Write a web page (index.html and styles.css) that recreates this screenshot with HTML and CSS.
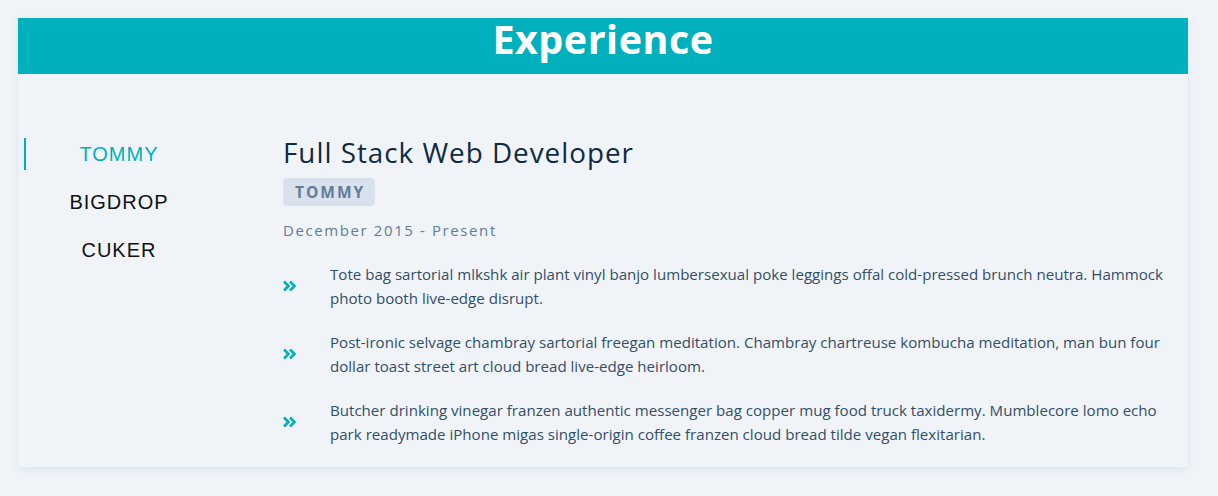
FILE: index.html
```html
<!DOCTYPE html>
<html lang="en">
<head>
<meta charset="utf-8">
<title>Experience</title>
<link rel="stylesheet" href="styles.css">
</head>
<body>
<section class="card">
  <header class="card-head"><h1>Experience</h1></header>
  <div class="card-body">
    <nav class="tabs">
      <div class="tab active">TOMMY</div>
      <div class="tab">BIGDROP</div>
      <div class="tab">CUKER</div>
    </nav>
    <div class="job">
      <h2 class="job-title">Full Stack Web Developer</h2>
      <span class="badge">TOMMY</span>
      <p class="dates">December 2015 - Present</p>
      <ul class="duties">
        <li>
          <svg class="chev" viewBox="0 0 14 12" aria-hidden="true"><path d="M1 1.5 L5.5 6 L1 10.5 M7 1.5 L11.5 6 L7 10.5" fill="none" stroke="currentColor" stroke-width="2.6" stroke-linejoin="miter"/></svg>
          <p>Tote bag sartorial mlkshk air plant vinyl banjo lumbersexual poke leggings offal cold-pressed brunch neutra. Hammock photo booth live-edge disrupt.</p>
        </li>
        <li>
          <svg class="chev" viewBox="0 0 14 12" aria-hidden="true"><path d="M1 1.5 L5.5 6 L1 10.5 M7 1.5 L11.5 6 L7 10.5" fill="none" stroke="currentColor" stroke-width="2.6" stroke-linejoin="miter"/></svg>
          <p>Post-ironic selvage chambray sartorial freegan meditation. Chambray chartreuse kombucha meditation, man bun four dollar toast street art cloud bread live-edge heirloom.</p>
        </li>
        <li>
          <svg class="chev" viewBox="0 0 14 12" aria-hidden="true"><path d="M1 1.5 L5.5 6 L1 10.5 M7 1.5 L11.5 6 L7 10.5" fill="none" stroke="currentColor" stroke-width="2.6" stroke-linejoin="miter"/></svg>
          <p>Butcher drinking vinegar franzen authentic messenger bag copper mug food truck taxidermy. Mumblecore lomo echo park readymade iPhone migas single-origin coffee franzen cloud bread tilde vegan flexitarian.</p>
        </li>
      </ul>
    </div>
  </div>
</section>
</body>
</html>
```
FILE: styles.css
```css
* { box-sizing: border-box; }
html, body { margin: 0; padding: 0; }
body {
  background: #f0f4f8;
  font-family: "Open Sans", "Noto Sans", sans-serif;
  color: #334e68;
  padding: 18px 30px 30px 18px;
}
.card {
  width: 1170px;
  background: #f0f4f8;
  box-shadow: 0 2px 8px rgba(0, 150, 180, 0.12);
}
.card-head {
  background: #00b0bc;
  height: 56px;
  text-align: center;
}
.card-head h1 {
  margin: 0;
  color: #fff;
  font-size: 39.5px;
  line-height: 42px;
  font-weight: 700;
  letter-spacing: 0.5px;
}
.card-body {
  display: flex;
  padding: 64px 18px 21px 6px;
}
.tabs {
  width: 188px;
  flex: none;
  display: flex;
  flex-direction: column;
  gap: 16px;
}
.tab {
  font-family: "Liberation Sans", Arial, sans-serif;
  font-size: 20px;
  letter-spacing: 1px;
  color: #111;
  text-align: center;
  line-height: 32px;
  border-left: 2px solid transparent;
}
.tab.active {
  color: #00b0bc;
  border-left-color: #00b0bc;
}
.job {
  flex: 1;
  margin-left: 71px;
}
.job-title {
  margin: -2px 0 0;
  font-size: 27.8px;
  font-weight: 400;
  letter-spacing: 1px;
  color: #102a43;
  line-height: 32px;
}
.badge {
  display: inline-block;
  margin-top: 10px;
  background: #d9e2ec;
  color: #627d98;
  font-weight: 700;
  font-size: 15.5px;
  letter-spacing: 2px;
  line-height: 28px;
  padding: 0 10px 0 12px;
  border-radius: 4px;
}
.dates {
  margin: 12px 0 0;
  font-size: 15px;
  letter-spacing: 1.6px;
  color: #627d98;
  line-height: 24px;
}
.duties {
  list-style: none;
  margin: 20px 0 0;
  padding: 0;
  display: flex;
  flex-direction: column;
  gap: 20px;
}
.duties li {
  display: flex;
  align-items: center;
}
.chev {
  width: 14px;
  height: 12px;
  color: #00b0bc;
  flex: none;
  margin-right: 33px;
  margin-top: 0;
}
.duties p {
  margin: 0;
  font-size: 15.1px;
  line-height: 24px;
  color: #334e68;
}
```
